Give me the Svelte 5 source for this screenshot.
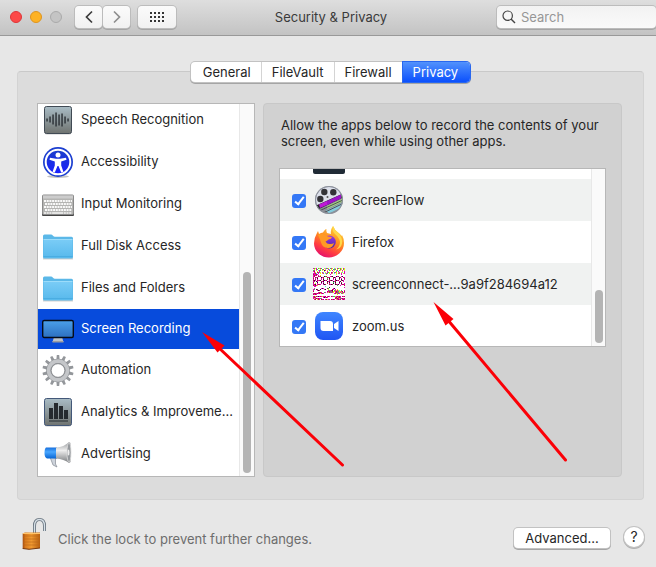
<script>
  const categories = [
    { id: 'speech', label: 'Speech Recognition' },
    { id: 'access', label: 'Accessibility' },
    { id: 'keyboard', label: 'Input Monitoring' },
    { id: 'folder', label: 'Full Disk Access' },
    { id: 'folder', label: 'Files and Folders' },
    { id: 'screen', label: 'Screen Recording' },
    { id: 'gear', label: 'Automation' },
    { id: 'chart', label: 'Analytics & Improveme...' },
    { id: 'horn', label: 'Advertising' }
  ];
  let selected = $state(5);

  const tabs = ['General', 'FileVault', 'Firewall', 'Privacy'];
  let tab = $state('Privacy');

  let apps = $state([
    { id: 'screenflow', label: 'ScreenFlow', on: true },
    { id: 'firefox', label: 'Firefox', on: true },
    { id: 'noise', label: 'screenconnect-...9a9f284694a12', on: true },
    { id: 'zoom', label: 'zoom.us', on: true }
  ]);

  const teeth = Array.from({ length: 14 }, (_, i) => (i * 360) / 14);
  const bars = [[5, 14, 3], [8, 12, 6], [11, 10, 10], [14, 8, 14], [17, 10, 11], [20, 9, 13], [23, 12, 7], [26, 14, 3]];

  // k black, m magenta, r dark red, y yellow, g green, c cyan
  const colours = { k: '#2a1030', m: '#e600b4', r: '#b01848', y: '#e9e91c', g: '#35d64a', c: '#53dbe9' };
  const bitmap = [
    'mgym.gymg..ycmgy.gmy.cy.mgygy.my',
    '.y.mg..y.gm.y..mc.y.gmg.y..my.gy',
    'gm.y.cmg.y.km.y.gy.m.y.cm.gy.m.y',
    'mr..y.m....y..m.....y..g.m...y.m',
    '.my.rmgy.mc.y.mgy.rm.gmy.ym.yc.m',
    'mmrc.m.y.ym.cmg.y.my.c.y.mg.m.ym',
    'rmmrm........y...m.....y....m...',
    'mrmr.m.y........................',
    'mr...rmr...kgr...mrk...kmr..mk..',
    'm.rmr...kmr...rmr...rkm...kr..rm',
    'r.m.k...m.r...g.k...r.m...k.m..r',
    'm.r.m...m.k...r.r...m.k...r.k..m',
    'rkm.rmrk..rkmr..mrkm..rkmr..rkm.',
    'mr.km...rmk...kmr...kmr...mk..m.',
    'r...k...k.m...r.k...g.k...k.r...',
    'm.y.m...m.k...r.m...k.r...m.k..m',
    'mrk.mrrm..mkr...rmkr..krmk..mrrm',
    'rmrmy...................g..m...r',
    '.mm.........c...................',
    '................k..............m',
    '.m......mkm...rg....mk..........',
    'mg.kr..k...mk..y...rm.m.y.......',
    'm...mkr........mgmrk.gmymyc.g..m',
    'r.............rmrgmryymrmgyymr.r',
    '.....mrrm..gm.myrmgmy.mrgmymymgm',
    'mrrmrmrymrm..........mrymgm.gmy.',
    'rmrm....................y.......',
    '................................',
    'mryrmkmrmymmr.mrm.rmggymrmrm.rmr',
    'mrm.......mkmrm.......mrymrm....',
    'mymrmrmgm.............rmrmygmrmr',
    '.mr.yrm.rmr.mrymm.rmrm.ymrmr.mrm'
  ];
  const pixels = bitmap.flatMap((row, y) =>
    [...row].map((c, x) => ({ x, y, c })).filter((p) => p.c !== '.')
  );
</script>

{#snippet icon(id)}
  <svg class="icon" viewBox="0 0 32 32" aria-hidden="true">
    {#if id === 'speech' || id === 'chart'}
      <rect x="2.500" y="3" width="27" height="27.500" rx="2" fill="#777" opacity=".4" />
      <rect x="2.500" y="2.500" width="27" height="27" rx="2" fill="url(#slate)" stroke={id === 'chart' ? '#435879' : '#404a54'} />
      {#if id === 'speech'}
        {#each bars as [x, y, h]}
          <rect x={x - 0.7} y={y + 0.5} width="1.500" height={h} fill="#30363b" />
        {/each}
      {:else}
        <path d="M7 12h4v11H7zM12 7h4v16h-4zM17 10h4v13h-4zM22 14h4v9h-4zM7 24.500h19v1H7z" fill="#252a2e" />
      {/if}
    {:else if id === 'access'}
      <ellipse cx="16" cy="30.500" rx="11" ry="1.500" fill="#888" opacity=".5" />
      <circle cx="16" cy="16" r="15" fill="#1c3fd0" />
      <circle cx="16" cy="16" r="12.300" fill="url(#blue)" stroke="#fff" stroke-width="2" />
      <circle cx="16" cy="9" r="2.500" fill="#fff" />
      <path d="M8 11.700l6 1h4l6-1 .5 2-5.300 1.700v4l2.200 6.300-2.200.8-2.700-6.500h-1L12.800 26.500l-2.200-.8 2.200-6.300v-4l-5.300-1.700z" fill="#fff" />
    {:else if id === 'keyboard'}
      <g transform="translate(0 1)">
        <rect x="0" y="7" width="32" height="20" rx="1" fill="#444" />
        <rect x=".5" y="6" width="31" height="19.500" rx="1" fill="#b4b4b2" stroke="#8b8b8b" />
        <path d="M1 6.500h30v3H1z" fill="#ccc" />
        <path d="M2 12h28M3 15h27M2 18h28M3 21h27" stroke="#f9f9f9" stroke-width="2" stroke-dasharray="2 .7" />
        <path d="M2 24h28" stroke="#f4f4f4" stroke-width="1.500" stroke-dasharray="2 .7 2 .7 2 .7 11 .7" />
      </g>
    {:else if id === 'folder'}
      <path d="M1 28h30v1.500H1z" fill="#999" opacity=".45" />
      <path d="M1 6q0-1.500 1.500-1.500H9q1 0 2 1.200t2 1.100h16.500Q31 6.800 31 8.300V27q0 1.500-1.500 1.500h-27Q1 28.500 1 27z" fill="#5bb8e8" />
      <path d="M1.500 9.500h29V27q0 1-1 1h-27q-1 0-1-1z" fill="url(#folderblue)" />
      <path d="M1.500 9.500h29" stroke="#9cdcfa" />
      <path d="M1.500 26.500h29" stroke="#43a7dd" stroke-width=".7" />
    {:else if id === 'screen'}
      <path d="M12 24h8l1.500 5h-11z" fill="#bdc3c9" />
      <path d="M10.500 28h11v1.500h-11z" fill="#9a9ca0" />
      <rect x=".7" y="7.500" width="30.600" height="17" rx="1.500" fill="url(#display)" stroke="#060c18" stroke-width="1.400" />
    {:else if id === 'gear'}
      <g transform="translate(16 16.500)">
        {#each teeth as a}
          <path d="M-1.700 -10L-1.200 -15.600H1.200L1.700 -10z" fill="#94979b" transform={`rotate(${a})`} />
        {/each}
        <circle r="9.300" fill="none" stroke="#8d9094" stroke-width="5" />
        <circle r="9.400" fill="none" stroke="#c4c6c9" stroke-width="3.600" />
        <circle r="6.800" fill="none" stroke="#85888c" stroke-width=".8" />
      </g>
    {:else if id === 'horn'}
      <path d="M8 19l3 8 4 2-1.500-3v-6z" fill="#cdd3db" stroke="#858b94" stroke-width=".7" />
      <path d="M4 9.500h11v11H5q-2.500-1-2.500-5.500T4 9.500z" fill="url(#hornblue)" />
      <path d="M14 9.500q8-.5 13-5.500l1.500 1v19l-1.500 1q-5-4-13-4.500z" fill="url(#metal)" />
      <ellipse cx="27" cy="14.500" rx="2" ry="10" fill="#94989c" stroke="#dedede" stroke-width=".8" />
      <ellipse cx="26.500" cy="14.500" rx="1" ry="3" fill="#eee" />
    {:else if id === 'screenflow'}
      <clipPath id="reel"><circle cx="16" cy="16" r="13.500" /></clipPath>
      <circle cx="16" cy="16" r="14" fill="#808692" />
      <g clip-path="url(#reel)">
        <path d="M0 0h32v32H0z" fill="#dce0ea" />
        <path d="M2 25L32 11v23H5z" fill="#8c9096" />
        <path d="M3 21.500L31 9v4L4 26z" fill="#262226" />
        <path d="M6 20.500l9-4v4L7 24z" fill="#bf18d8" /><path d="M14 17L28 10.500v4L14 21z" fill="#9c13c8" />
        <path d="M14 22l17-8v3l-17 8z" fill="#a5d77e" />
        <path d="M13 26.500l17-8v4l-14 7z" fill="#83cbdc" />
        <path d="M6 27l24-11M8 30l22-10.500" stroke="#4d5156" />
      </g>
      <circle cx="11.300" cy="8" r="3.200" fill="#333337" /><circle cx="20.300" cy="8.300" r="3.200" fill="#333337" />
      <circle cx="7.300" cy="15" r="3.200" fill="#333337" /><circle cx="14.500" cy="13" r="1" fill="#555" />
      <circle cx="16" cy="16" r="13.500" fill="none" stroke="#8b909a" />
    {:else if id === 'firefox'}
      <path d="M20 0q1.500 4 4.500 6 3 2 4 4l.5-1q2 3.500 2 8 0 6-4.500 10.200T16 31.500 5.500 27.400 1 17.500Q1 12 3.500 8L5 5l1 3q2-1.500 4-1.500Q12 3 13.500 3q-.5 2 .5 4l4 1Q17 4 20 0z" fill="url(#flame)" />
      <path d="M20 0q-1.500 5 2.500 8.500T27 16q0 5-4 7.500 5-1 6-6Q30 12 25 6.500 21.500 4 20 0z" fill="#ffd84a" />
      <circle cx="16.300" cy="16" r="6.500" fill="url(#globe)" />
      <path d="M5 9q3-2 6-.5l4 2 4 .5q-.5 2-3.500 2.500-1.500 1.500-3 2 1.500 3 5 2.500 2 0 3.500-1-1.500 5.500-6.500 5T8 16.500Q7 13 5 9z" fill="#ff9a25" />
    {:else if id === 'noise'}
      <g shape-rendering="crispEdges">
        <path d="M0 0h32v32H0z" fill="#fff" />
        {#each pixels as p}
          <rect x={p.x} y={p.y} width="1" height="1" fill={colours[p.c]} />
        {/each}
      </g>
    {:else if id === 'zoom'}
      <rect x="2" y="2" width="28" height="28" rx="8" fill="url(#zoomblue)" />
      <path d="M7.500 11H17q3 0 3 3v7h-9.500q-3 0-3-3zM21 14l4.500-3v10L21 18z" fill="#fff" />
    {/if}
  </svg>
{/snippet}

<svg class="defs" aria-hidden="true">
  <defs>
    <linearGradient id="slate" x2="0" y2="1"><stop stop-color="#a9bcc5" /><stop offset="1" stop-color="#6f7370" /></linearGradient>
    <linearGradient id="blue" x2="0" y2="1"><stop stop-color="#1b3fc9" /><stop offset="1" stop-color="#1b20ff" /></linearGradient>
    <linearGradient id="folderblue" x2="0" y2="1"><stop stop-color="#7accf6" /><stop offset="1" stop-color="#58b9ec" /></linearGradient>
    <linearGradient id="display" x2="0" y2="1"><stop stop-color="#4ba0ea" /><stop offset="1" stop-color="#2c6fc0" /></linearGradient>
    <linearGradient id="hornblue" x2="0" y2="1"><stop stop-color="#176fdc" /><stop offset=".4" stop-color="#49a7ff" /><stop offset="1" stop-color="#0765d4" /></linearGradient>
    <linearGradient id="metal" x2="0" y2="1"><stop stop-color="#989b9e" /><stop offset=".4" stop-color="#eee" /><stop offset="1" stop-color="#777a7d" /></linearGradient>
    <linearGradient id="flame" x1=".8" x2=".3" y2="1"><stop stop-color="#ffdc3e" /><stop offset=".45" stop-color="#ff8b1f" /><stop offset=".75" stop-color="#ff3b42" /><stop offset="1" stop-color="#e3106f" /></linearGradient>
    <linearGradient id="globe" x2="0" y2="1"><stop stop-color="#9b35e8" /><stop offset="1" stop-color="#4a2aa5" /></linearGradient>
    <linearGradient id="zoomblue" x2="0" y2="1"><stop stop-color="#3f86ff" /><stop offset="1" stop-color="#1f55f3" /></linearGradient>
    <linearGradient id="brass"><stop stop-color="#a34b10" /><stop offset=".15" stop-color="#d8791c" /><stop offset=".5" stop-color="#f09a31" /><stop offset="1" stop-color="#b9600f" /></linearGradient>
  </defs>
</svg>

<main class="window">
  <header>
    <div class="left">
      <div class="lights">
        <button class="light red" aria-label="Close"></button>
        <button class="light amber" aria-label="Minimize"></button>
        <button class="light off" aria-label="Zoom" disabled></button>
      </div>
      <div class="nav">
        <button class="tool" aria-label="Back">
          <svg width="10" height="14" viewBox="0 0 10 14"><path d="M8 1.500L2.500 7 8 12.500" fill="none" stroke="#3c3c3c" stroke-width="1.700" /></svg>
        </button>
        <button class="tool" aria-label="Forward">
          <svg width="10" height="14" viewBox="0 0 10 14"><path d="M2 1.500L7.500 7 2 12.500" fill="none" stroke="#8e8e8e" stroke-width="1.700" /></svg>
        </button>
      </div>
      <button class="tool wide" aria-label="Show all">
        <svg width="14" height="10" viewBox="0 0 14 10"><path d="M0 1h14M0 5h14M0 9h14" stroke="#333" stroke-width="2" stroke-dasharray="2 2" /></svg>
      </button>
    </div>
    <h1>Security &amp; Privacy</h1>
    <label class="search">
      <svg width="14" height="14" viewBox="0 0 14 14" aria-hidden="true"><circle cx="5.700" cy="5.700" r="4.700" fill="none" stroke="#444" stroke-width="1.200" /><path d="M9 9l4 4" stroke="#444" stroke-width="1.500" /></svg>
      <input type="text" placeholder="Search" aria-label="Search" />
    </label>
  </header>

  <section class="body">
    <nav class="tabs">
      {#each tabs as t}
        <button class:active={t === tab} onclick={() => (tab = t)}>{t}</button>
      {/each}
    </nav>
    <div class="panel">
      <div class="list sidebar">
        <ul>
          {#each categories as c, i}
            <li><button class="category" class:selected={i === selected} onclick={() => (selected = i)}>{@render icon(c.id)}<span>{c.label}</span></button></li>
          {/each}
        </ul>
        <div class="track"><div class="thumb tall"></div></div>
      </div>
      <div class="group">
        <p>Allow the apps below to record the contents of your screen, even while using other apps.</p>
        <div class="list apps">
          <ul>
            <li class="row"><span class="dark"></span></li>
            {#each apps as a}
              <li class="row"><label><input type="checkbox" bind:checked={a.on} />{@render icon(a.id)}<span>{a.label}</span></label></li>
            {/each}
          </ul>
          <div class="track"><div class="thumb short"></div></div>
        </div>
      </div>
    </div>
  </section>

  <footer>
    <button class="lock" aria-label="Lock">
      <svg width="24" height="32" viewBox="0 0 24 32">
        <path d="M12.500 15V8q0-6.500 5-6.500T22.500 8v5" fill="none" stroke="#67737e" stroke-width="3" />
        <path d="M12.500 15V8q0-6.500 5-6.500T22.500 8v5" fill="none" stroke="#d7e0e7" stroke-width="1.300" />
        <path d="M.7 15.500L3 14.500h15V30L7 31.300.7 30.500z" fill="url(#brass)" />
        <path d="M1 18h17M1 21h17M1 24h17M1 27h17" stroke="#b8661a" stroke-width=".6" />
        <path d="M1 15.500h17" stroke="#ffc46a" />
        <path d="M.7 30.500L7 31.300 18 30" fill="none" stroke="#75360a" />
      </svg>
    </button>
    <span class="hint">Click the lock to prevent further changes.</span>
    <button class="advanced">Advanced...</button>
    <button class="help" aria-label="Help">?</button>
  </footer>

  <svg class="arrows" width="656" height="567" viewBox="0 0 656 567" aria-hidden="true">
    <g stroke="#fb0007" stroke-width="3" stroke-linecap="round" fill="#fb0007">
      <path d="M218 347L342.500 465M447 319L565.500 460" />
      <path d="M202 332l22.500 13.500-7 7zM433.500 302l20 17-8 6.500z" stroke="none" />
    </g>
  </svg>
</main>

<style>
  :global(body) { margin: 0; background: #e7e7e7; }
  .window { position: relative; min-height: 100vh; overflow: hidden; box-sizing: border-box; background: #e7e7e7; color: #262626; font: 13px/16px Inter, "Liberation Sans", sans-serif; }
  .window :is(button, input) { font: inherit; color: inherit; }
  button { margin: 0; padding: 0; border: 0; background: none; box-sizing: border-box; }
  ul { list-style: none; margin: 0; padding: 0; }
  .defs { position: absolute; width: 0; height: 0; }
  .icon { width: 32px; height: 32px; flex: none; display: block; }

  header { display: grid; grid-template-columns: 1fr auto 1fr; align-items: center; height: 36px; box-sizing: border-box; padding: 0 0 1px 6px; border-bottom: 1px solid #999; background: linear-gradient(#dedede, #c3c3c3); }
  .left { display: flex; align-items: center; padding-left: 4px; }
  .lights { display: flex; gap: 8px; margin-right: 13px; }
  .light { width: 12px; height: 12px; border-radius: 50%; border: 1px solid; }
  .window .red { background: #fc4948; border-color: #de3537; }
  .window .amber { background: #fdb225; border-color: #de9420; }
  .window .off { background: #c4c4c4; border-color: #aaa; }
  .nav { display: flex; gap: 1px; margin-right: 8px; }
  .tool { display: flex; align-items: center; justify-content: center; width: 27px; height: 22px; border-radius: 4px; background: linear-gradient(#fbfbfb, #f1f1f1); box-shadow: 0 0 0 1px #bcbcbc, 0 1px 0 1px #a5a5a5; }
  .wide { width: 38px; }
  h1 { margin: 0; font-size: 13px; font-weight: 400; color: #3a3a3a; }
  .search { justify-self: end; display: flex; align-items: center; gap: 5px; width: 159px; height: 22px; box-sizing: border-box; padding-left: 5px; border-radius: 4px; background: linear-gradient(#f2f2f2, #fafafa); box-shadow: 0 0 0 1px #bcbcbc, 0 1px 0 1px #a5a5a5; }
  .search svg { flex: none; }
  .search input { min-width: 0; flex: 1; padding: 0; border: 0; outline: 0; background: none; }
  .search input::placeholder { color: #969696; opacity: 1; }

  .body { display: flex; flex-direction: column; align-items: center; padding: 26px 12px 0 17px; }
  .tabs { display: flex; z-index: 1; margin-bottom: -11px; border-radius: 4px; background: #fff; box-shadow: 0 0 0 1px #c2c2c2, 0 1px 0 1px #a5a5a5; }
  .tabs button { height: 20px; padding: 0 10px 1px; border-right: 1px solid #d4d4d4; }
  .tabs button:first-child { padding-left: 12px; }
  .tabs button.active { border: 0; padding-right: 12px; border-radius: 0 4px 4px 0; background: linear-gradient(#5292fc, #0b50fd); color: #fff; box-shadow: 0 0 0 1px #2867ef; }
  .panel { align-self: stretch; display: flex; gap: 8px; box-sizing: border-box; padding: 31px 21px 22px 19px; border: 1px solid #d3d3d3; border-top-color: #c9c9c9; border-radius: 4px; background: #dcdcdc; }
  .list { display: flex; box-sizing: border-box; border: 1px solid #b7b7b7; background: #fff; overflow: hidden; }
  .list ul { flex: 1; min-width: 0; }
  .track { display: flex; align-items: flex-end; justify-content: center; flex: none; width: 14px; box-sizing: border-box; padding-bottom: 3px; background: #fafafa; border-left: 1px solid #e8e8e8; }
  .thumb { width: 8px; border-radius: 4px; background: #b4b4b4; }
  .tall { height: 201px; }
  .short { height: 53px; }
  .sidebar { flex: none; width: 218px; height: 374px; }
  .sidebar .track { width: 15px; }
  .sidebar ul { margin-top: -5px; }
  .category { display: flex; align-items: center; gap: 7px; width: 100%; height: 42px; padding-left: 4px; text-align: left; white-space: nowrap; }
  .category span { padding-bottom: 3px; }
  .category.selected { height: 40px; background: #074bdc; }
  .category.selected span { color: #fff; }
  .group { flex: 1; min-width: 0; box-sizing: border-box; padding: 13px 15px; border: 1px solid #c8c8c8; border-radius: 4px; background: #d1d1d1; }
  .group p { margin: 0 0 19px; padding: 0 0 0 2px; }
  .apps { height: 179px; }
  .apps ul { margin-top: -32px; }
  .row { display: flex; align-items: center; height: 42px; padding-left: 12px; }
  .row:nth-child(even) { background: #f0f2f1; }
  .row label { display: flex; align-items: center; gap: 7px; white-space: nowrap; }
  .row label span { padding-bottom: 1px; }
  .dark { width: 32px; height: 32px; margin-left: 21px; border-radius: 2px; background: #202b36; }
  .row input { appearance: none; width: 14px; height: 14px; margin: 2px 0 0; border-radius: 3px; background: #3478f6; display: grid; place-items: center; }
  .row input:checked::after { content: ""; width: 3px; height: 8px; margin-top: -2px; border: solid #fff; border-width: 0 2px 2px 0; transform: rotate(38deg); }

  footer { display: flex; align-items: center; padding: 16px 12px 16px 22px; }
  .lock { width: 24px; height: 32px; margin: 2px 12px 0 0; }
  .lock svg { display: block; }
  .hint { flex: 1; padding-top: 12px; color: #6d6d6d; }
  .advanced { width: 96px; height: 20px; margin: 10px 14px 0 0; border-radius: 4px; background: #fff; box-shadow: 0 0 0 1px #c2c2c2, 0 1px 0 1px #a5a5a5; }
  .help { width: 20px; height: 20px; margin-top: 8px; border-radius: 50%; background: #fff; box-shadow: 0 0 0 1px #c2c2c2, 0 1px 0 1px #b0b0b0; }
  .window .help { font-size: 14px; }
  .arrows { position: absolute; top: 0; left: 0; pointer-events: none; z-index: 2; }
</style>
